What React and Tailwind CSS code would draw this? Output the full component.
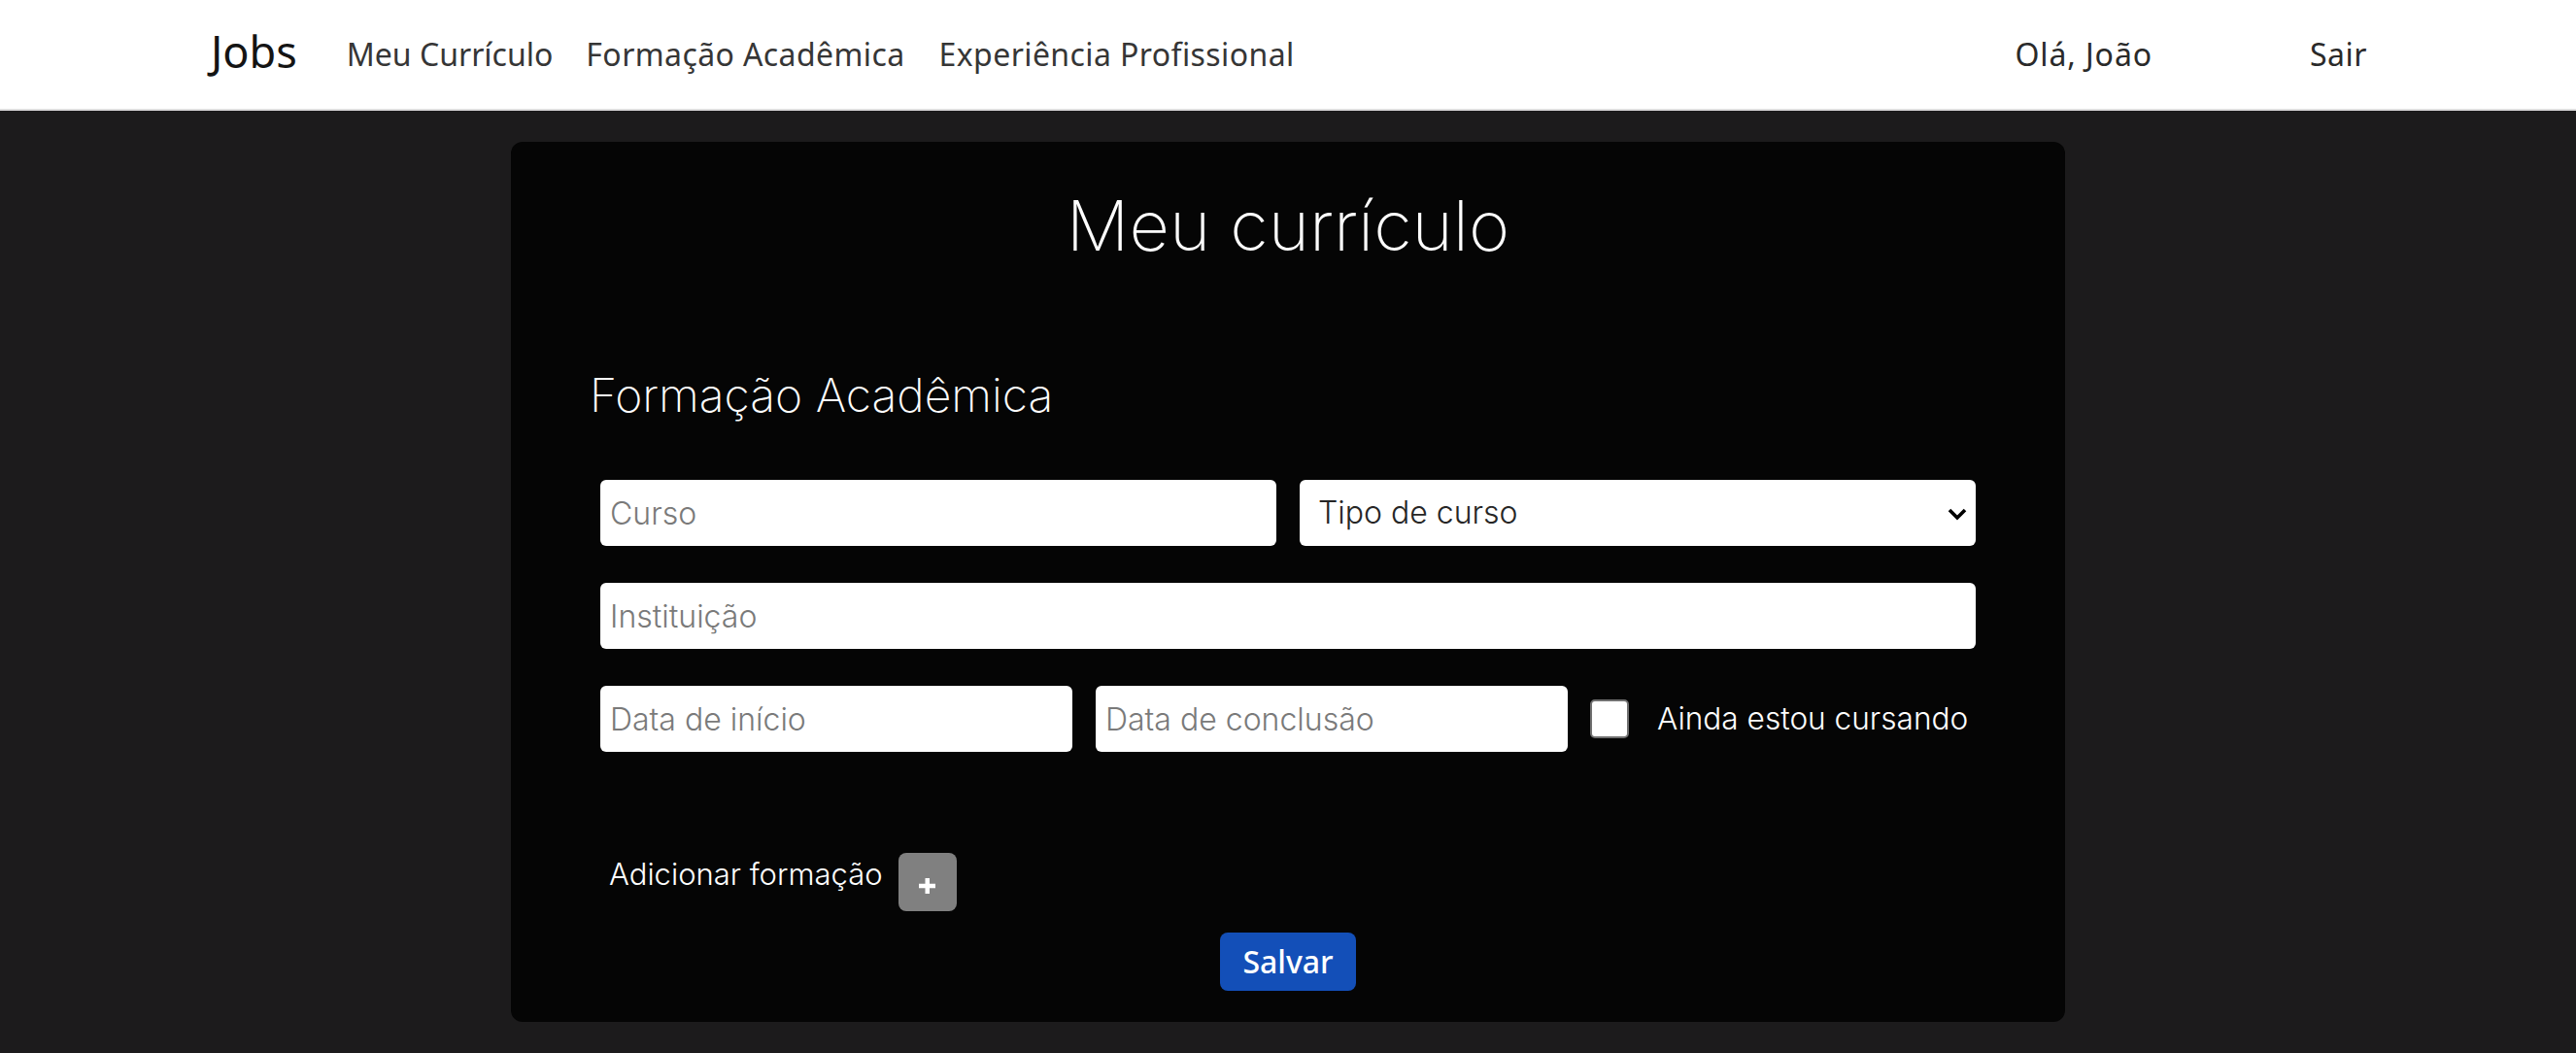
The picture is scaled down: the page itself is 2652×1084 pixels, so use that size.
import React from "react";

export default function App() {
  return (
    <div className="min-h-screen bg-[#1c1b1c]">
      <nav className="h-[114px] bg-white border-b-2 border-[#dedede] flex items-center pl-[217px] pr-[215px] font-['Noto_Sans',sans-serif]">
        <a className="text-[45px] leading-[48px] text-[#141414] mb-[6px] mr-[51px]">Jobs</a>
        <div className="flex text-[32px] leading-[48px] text-[#363636]">
          <a>Meu Currículo</a>
          <a className="ml-[34px] tracking-[0.4px]">Formação Acadêmica</a>
          <a className="ml-[35px] tracking-[0.4px]">Experiência Profissional</a>
        </div>
        <div className="ml-auto flex gap-[162px] text-[32px] leading-[48px] text-[#2a2a2a]">
          <a className="tracking-[0.9px]">Olá, João</a>
          <a className="tracking-[0.5px]">Sair</a>
        </div>
      </nav>

      <main className="pt-[32px] pb-[32px]">
        <div className="mx-auto w-[1600px] rounded-[12px] bg-[#050505] pt-[42px] pb-[32px] font-['Inter',sans-serif]">
          <h1 className="text-center text-[72px] leading-[88px] font-extralight text-white">Meu currículo</h1>

          <h2 className="mt-[103px] pl-[81px] text-[48px] leading-[56px] font-extralight text-white">Formação Acadêmica</h2>

          <div className="mt-[59px] px-[92px] flex flex-col gap-[38px]">
            <div className="grid grid-cols-2 gap-[24px]">
              <input
                placeholder="Curso"
                className="w-full h-[68px] rounded-[6px] bg-white px-[10px] text-[32px] font-light text-[#222] placeholder:text-[#7a7a7a] outline-none"
              />
              <div className="relative h-[68px]">
                <select className="w-full h-full appearance-none rounded-[6px] bg-white pl-[19px] pr-[50px] text-[32px] font-light text-[#262626] outline-none">
                  <option>Tipo de curso</option>
                </select>
                <svg className="absolute right-[9px] top-[28px] pointer-events-none" width="20" height="14" viewBox="0 0 20 14">
                  <polyline points="2,3 10,11 18,3" fill="none" stroke="#000" strokeWidth="3.6" strokeLinecap="butt" strokeLinejoin="miter" />
                </svg>
              </div>
            </div>

            <input
              placeholder="Instituição"
              className="w-full h-[68px] rounded-[6px] bg-white px-[10px] text-[32px] font-light text-[#222] placeholder:text-[#7a7a7a] outline-none"
            />

            <div className="flex items-center">
              <input
                placeholder="Data de início"
                className="w-[486px] h-[68px] rounded-[6px] bg-white px-[10px] text-[32px] font-light text-[#222] placeholder:text-[#7a7a7a] outline-none"
              />
              <input
                placeholder="Data de conclusão"
                className="ml-[24px] w-[486px] h-[68px] rounded-[6px] bg-white px-[10px] text-[32px] font-light text-[#222] placeholder:text-[#7a7a7a] outline-none"
              />
              <input
                type="checkbox"
                className="ml-[23px] w-[40px] h-[40px] appearance-none rounded-[5px] border-2 border-[#707070] bg-white"
              />
              <span className="ml-[29px] text-[31.6px] leading-[40px] font-light text-white">Ainda estou cursando</span>
            </div>
          </div>

          <div className="mt-[104px] px-[92px] flex items-start">
            <span className="mt-[2px] pl-[9px] text-[31px] leading-[40px] font-light text-white">Adicionar formação</span>
            <button className="ml-[16px] w-[60px] h-[60px] rounded-[8px] bg-[#808080] flex items-center justify-center pt-[8px]">
              <svg width="17" height="16" viewBox="0 0 17 16">
                <rect x="6.5" y="0" width="4.5" height="16" fill="#fff" />
                <rect x="0" y="5.75" width="17" height="4.5" fill="#fff" />
              </svg>
            </button>
          </div>

          <div className="mt-[22px] flex justify-center">
            <button className="w-[140px] h-[60px] rounded-[8px] bg-[#134fb8] text-white text-[32px] font-medium font-['Noto_Sans',sans-serif]">
              Salvar
            </button>
          </div>
        </div>
      </main>
    </div>
  );
}
